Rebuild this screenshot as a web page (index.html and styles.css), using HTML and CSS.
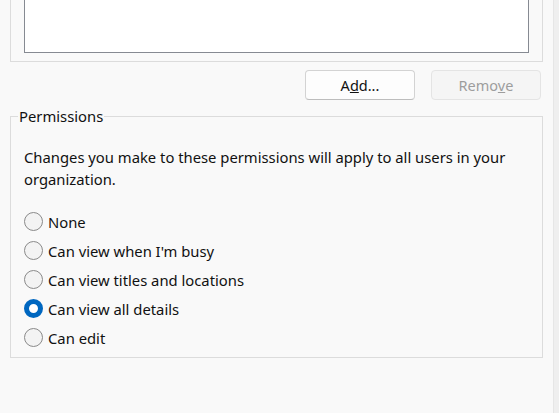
FILE: index.html
```html
<!DOCTYPE html>
<html>
<head>
<meta charset="utf-8">
<link rel="stylesheet" href="styles.css">
</head>
<body>
<div class="window">
  <div class="main">
    <div class="top-group">
      <div class="listbox"></div>
    </div>
    <div class="buttons">
      <button class="btn">A<u>d</u>d...</button>
      <button class="btn disabled">Remo<u>v</u>e</button>
    </div>
    <fieldset class="perm">
      <legend>Permissions</legend>
      <p class="note">Changes you make to these permissions will apply to all users in your organization.</p>
      <div class="radios">
        <label class="radio"><span class="dot"></span>None</label>
        <label class="radio"><span class="dot"></span>Can view when I'm busy</label>
        <label class="radio"><span class="dot"></span>Can view titles and locations</label>
        <label class="radio"><span class="dot checked"></span>Can view all details</label>
        <label class="radio"><span class="dot"></span>Can edit</label>
      </div>
    </fieldset>
  </div>
  <div class="strip"></div>
</div>
</body>
</html>
```
FILE: styles.css
```css
html, body {
  margin: 0;
  padding: 0;
  height: 100%;
  background: #f9f9f9;
  font-family: "Noto Sans", "Open Sans", sans-serif;
  font-size: 14.8px;
  color: #111111;
}
.window {
  display: flex;
  height: 413px;
  overflow: hidden;
}
.main {
  width: 533px;
  padding: 0 10px;
}
.strip {
  flex: 1;
  border-left: 1px solid #e6e6e6;
  background: #efefef;
}
.top-group {
  border: 1px solid #dcdcdc;
  border-top: none;
  padding: 0 13px 8px 13px;
}
.listbox {
  height: 52px;
  background: #ffffff;
  border: 1px solid #868a92;
  border-top: none;
}
.buttons {
  display: flex;
  justify-content: flex-end;
  gap: 16px;
  margin-top: 8px;
  padding-right: 2px;
}
.btn {
  width: 110px;
  height: 30px;
  border: 1px solid #d3d3d3;
  border-bottom-color: #bdbdbd;
  border-radius: 4px;
  background: #fdfdfd;
  font-family: inherit;
  font-size: 14.5px;
  color: #111111;
  padding: 0;
}
.btn.disabled {
  background: #f5f5f5;
  border-color: #e4e4e4;
  color: #9d9d9d;
}
.perm {
  margin: 6px 0 0 0;
  padding: 20px 13px 5px 13px;
  border: 1px solid #dcdcdc;
}
.perm legend {
  padding: 0 1px;
  margin-left: -6px;
  line-height: 20px;
}
.note {
  margin: 0;
  line-height: 22px;
  max-width: 500px;
}
.radios {
  margin-top: 17px;
  display: flex;
  flex-direction: column;
}
.radio {
  display: flex;
  align-items: center;
  height: 29px;
  gap: 5px;
}
.dot {
  box-sizing: border-box;
  width: 19px;
  height: 19px;
  border-radius: 50%;
  border: 1px solid #8a8a8a;
  background: #f3f3f3;
  flex: none;
}
.dot.checked {
  border: 5px solid #0067c0;
  background: #ffffff;
}
```
